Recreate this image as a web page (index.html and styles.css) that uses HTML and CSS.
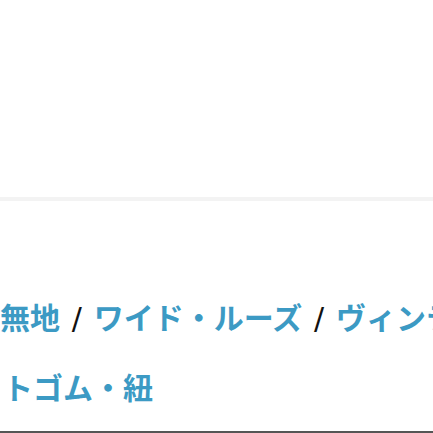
FILE: index.html
```html
<!DOCTYPE html>
<html lang="ja">
<head>
<meta charset="utf-8">
<link rel="stylesheet" href="styles.css">
</head>
<body>
<div class="page">
  <div class="top"></div>
  <div class="divider"></div>
  <div class="tags">
    <p class="line"><a class="tag">無地</a> <span class="sep">/</span> <a class="tag">ワイド・ルーズ</a> <span class="sep">/</span> <a class="tag">ヴィンテージ</a></p>
    <p class="line"><a class="tag">トゴム・紐</a></p>
  </div>
  <div class="bottom"></div>
</div>
</body>
</html>
```
FILE: styles.css
```css
html, body {
  margin: 0;
  padding: 0;
  background: #ffffff;
}
.page {
  width: 433px;
  height: 433px;
  overflow: hidden;
  display: flex;
  flex-direction: column;
  font-family: "Noto Sans CJK JP", "Noto Sans", sans-serif;
}
.top {
  height: 197px;
  flex: none;
}
.divider {
  height: 4px;
  background: #f3f3f3;
  flex: none;
}
.tags {
  flex: 1;
  padding-top: 80px;
  padding-left: 0;
  overflow: hidden;
}
.line {
  margin: 0;
  white-space: nowrap;
  font-size: 30px;
  line-height: 70px;
  height: 70px;
  font-weight: 700;
  word-spacing: 5px;
}
.line + .line {
  margin-left: 3px;
}
.tag {
  color: #3c9ac4;
}
.sep {
  color: #111111;
  font-weight: 400;
  font-family: "DejaVu Sans", sans-serif;
  font-size: 30px;
}
.bottom {
  height: 2px;
  background: #555555;
  flex: none;
}
```
